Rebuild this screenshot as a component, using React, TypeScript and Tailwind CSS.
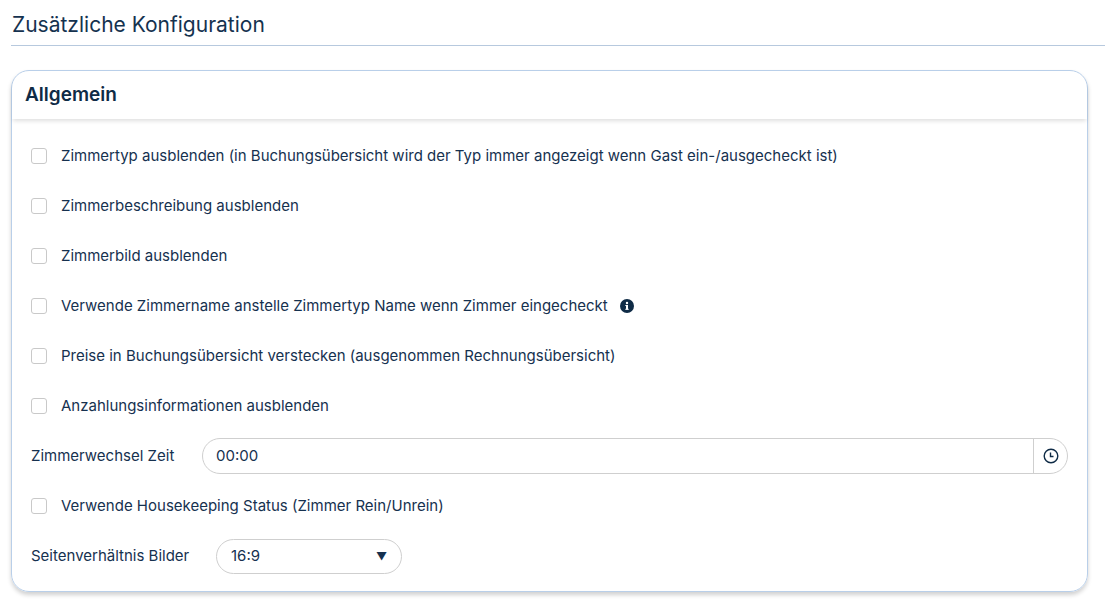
import React from "react";

const Cb = () => <span className="inline-block w-4 h-4 rounded-[3px] border border-[#c9c9c9] bg-white shrink-0" />;

const rows1 = [
  "Zimmertyp ausblenden (in Buchungsübersicht wird der Typ immer angezeigt wenn Gast ein-/ausgecheckt ist)",
  "Zimmerbeschreibung ausblenden",
  "Zimmerbild ausblenden",
];

function Row({ text, info }: { text: string; info?: boolean }) {
  return (
    <div className="h-[50px] flex items-center pl-[19px]">
      <Cb />
      <span className="ml-[14px]">{text}</span>
      {info && (
        <svg className="ml-[12px]" width="14" height="14" viewBox="0 0 14 14">
          <circle cx="7" cy="7" r="7" fill="#0f2b46" />
          <circle cx="7" cy="4" r="1.2" fill="#fff" />
          <rect x="6" y="6" width="2" height="4.5" fill="#fff" />
          <rect x="5.3" y="6" width="1.5" height="1" fill="#fff" />
          <rect x="5.3" y="9.8" width="3.4" height="1" fill="#fff" />
        </svg>
      )}
    </div>
  );
}

export default function App() {
  return (
    <div className="w-[1105px] h-[608px] bg-white text-[#16314f] font-[Inter,sans-serif] overflow-hidden">
      <div className="ml-[11px]">
        <h1 className="text-[21px] pt-[10px] pb-[5px] leading-[30px] pl-px text-[#15324f]">Zusätzliche Konfiguration</h1>
        <div className="h-px bg-[#b7c9de]" />
      </div>
      <div className="ml-[11px] mt-[24px] w-[1077px] h-[522px] rounded-[18px] border border-[#b9cfe9] shadow-[0_3px_4px_rgba(0,0,0,0.18)] text-[15px]">
        <div className="h-[48px] flex items-center px-[13px] text-[19px] font-semibold shadow-[0_3px_4px_-1px_rgba(0,0,0,0.13)] rounded-t-[18px] text-[#0f2b46]">Allgemein</div>
        <div className="pt-[12px]">
          {rows1.map((t) => <Row key={t} text={t} />)}
          <Row text="Verwende Zimmername anstelle Zimmertyp Name wenn Zimmer eingecheckt" info />
          <Row text="Preise in Buchungsübersicht verstecken (ausgenommen Rechnungsübersicht)" />
          <Row text="Anzahlungsinformationen ausblenden" />
          <div className="h-[50px] flex items-center pl-[19px] pr-[19px]">
            <span className="w-[171px]">Zimmerwechsel Zeit</span>
            <div className="flex-1 h-[36px] rounded-full border border-[#cfcfcf] flex items-center">
              <span className="flex-1 pl-[13px]">00:00</span>
              <span className="w-[34px] h-full border-l border-[#cfcfcf] flex items-center justify-center">
                <svg width="16" height="16" viewBox="0 0 16 16" fill="none" stroke="#0f2b46" strokeWidth="1.4">
                  <circle cx="8" cy="8" r="6.8" />
                  <path d="M7.5 4.5V8.5H10.5" />
                </svg>
              </span>
            </div>
          </div>
          <Row text="Verwende Housekeeping Status (Zimmer Rein/Unrein)" />
          <div className="h-[50px] flex items-center pl-[19px]">
            <span className="w-[185px]">Seitenverhältnis Bilder</span>
            <div className="w-[186px] h-[35px] rounded-full border border-[#cfcfcf] flex items-center justify-between pl-[14px] pr-[14px]">
              <span>16:9</span>
              <span className="text-[11px]">▼</span>
            </div>
          </div>
        </div>
      </div>
    </div>
  );
}
